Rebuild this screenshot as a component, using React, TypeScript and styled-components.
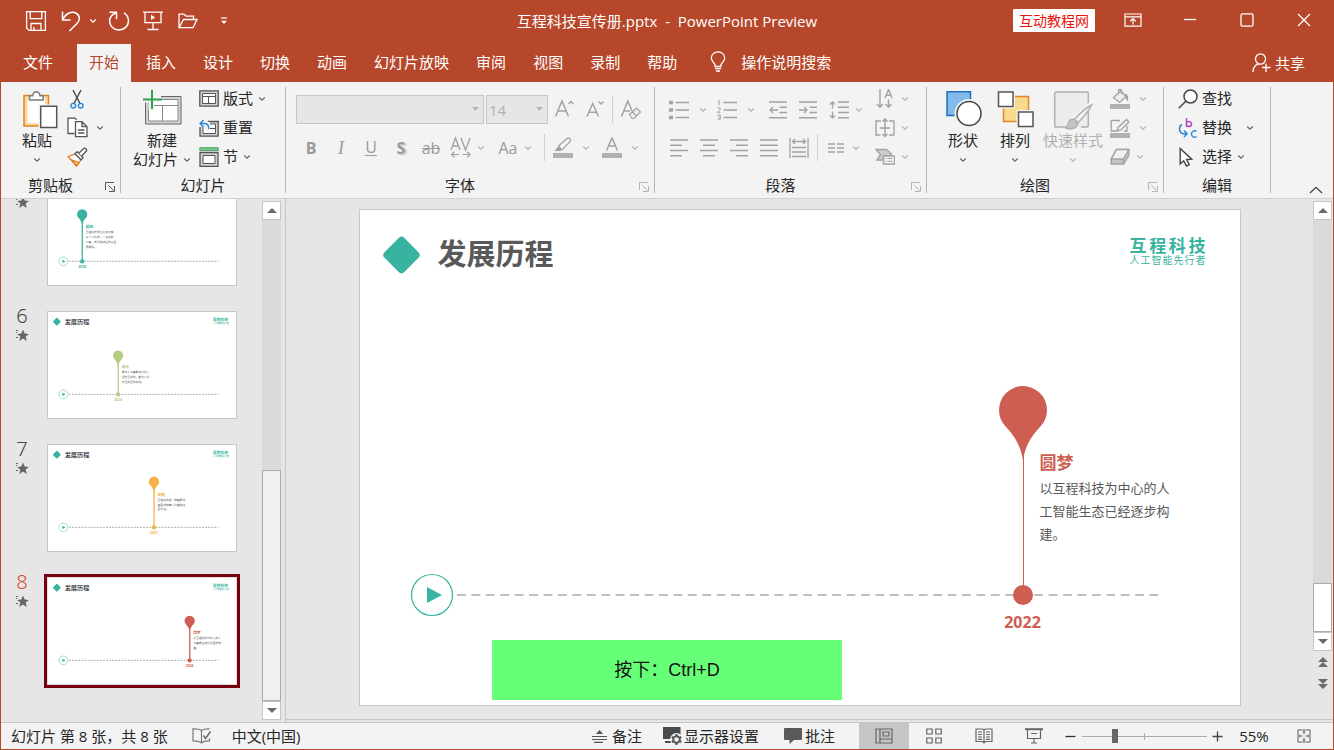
import React from 'react';
import styled, { createGlobalStyle, css } from 'styled-components';

const BRAND = '#b7472a';
const TEAL = '#37b3a0';
const UI_FONT = '"Open Sans", "Noto Sans CJK SC", sans-serif';
const DIM = '#a3a3a3';

const GlobalStyle = createGlobalStyle`
  *, *::before, *::after { box-sizing: border-box; }
  body { margin: 0; font-family: ${UI_FONT}; font-size: 15px; color: #262626; }
  button, select, input { font: inherit; color: inherit; }
  button { border: 0; padding: 0; background: none; cursor: default; }
`;

/* ---------- window frame ---------- */

const Window = styled.div`
  position: relative;
  display: grid;
  grid-template-rows: auto auto minmax(0, 1fr) auto;
  height: 100vh;
  min-width: 1280px;
  border: 1px solid ${BRAND};
  border-top: 0;
  background: #e6e6e6;
  overflow: hidden;
`;

const Header = styled.header`
  background: ${BRAND};
  color: #fff;
`;

const TitleBar = styled.div`
  display: grid;
  grid-template-columns: 1fr auto 1fr;
  height: 44px;
`;

const QuickAccess = styled.div`
  display: flex;
  align-items: center;
  height: 41px;
  padding-left: 18px;
`;

const WindowTitle = styled.h1`
  margin: 0;
  font-size: 15px;
  font-weight: 400;
  line-height: 42px;
  white-space: pre;
`;

const WindowControls = styled.div`
  display: flex;
  align-items: center;
  justify-content: flex-end;
  height: 40px;
  padding-right: 1px;
`;

const SiteBadge = styled.a`
  margin-right: 9px;
  padding: 0 6px;
  border-radius: 1px;
  background: #fff;
  color: #e8120c;
  font-size: 14px;
  line-height: 23px;
  text-decoration: none;
`;

const BarButton = styled.button<{ $w: number }>`
  display: flex;
  align-items: center;
  justify-content: center;
  width: ${(p) => p.$w}px;
  height: 40px;
`;

const TabBar = styled.nav`
  display: flex;
  gap: 3px;
  height: 38px;
  padding: 0 16px 0 10px;
  line-height: 34px;
`;

const Tab = styled.button<{ $active?: boolean; $file?: boolean }>`
  padding: 0 12px 3px;
  margin-right: ${(p) => (p.$file ? 9 : 0)}px;
  background: ${(p) => (p.$active ? '#f3f3f3' : 'transparent')};
  color: ${(p) => (p.$active ? BRAND : '#fff')};
`;

const TellMe = styled.button`
  display: flex;
  align-items: center;
  gap: 15px;
  padding: 0 0 3px 18px;
`;

const Share = styled.button`
  display: flex;
  align-items: center;
  gap: 4px;
  margin-left: auto;
  padding: 0 12px 1px;
`;

/* ---------- ribbon ---------- */

const Ribbon = styled.div`
  display: flex;
  height: 117px;
  border-bottom: 1px solid #d0d0d0;
  background: #f3f3f3;
`;

const Group = styled.section<{ $w: number }>`
  display: flex;
  flex-direction: column;
  flex: none;
  width: ${(p) => p.$w}px;
  padding: 2px 1px 0 0;
  background: linear-gradient(#b8b8b8, #b8b8b8) right 5px / 1px 106px no-repeat;
`;

const GroupBody = styled.div<{ $pad: number }>`
  display: flex;
  flex: none;
  height: 88px;
  padding-left: ${(p) => p.$pad}px;
`;

const Caption = styled.div`
  display: flex;
  flex: none;
  align-items: center;
  height: 26px;
`;

const CaptionText = styled.span`
  flex: 1;
  line-height: 26px;
  text-align: center;
`;

const Launcher = styled.button`
  display: flex;
  justify-content: center;
  width: 20px;
  padding-top: 4px;
`;

const BigButton = styled.button<{ $w: number }>`
  display: flex;
  flex-direction: column;
  align-items: center;
  width: ${(p) => p.$w}px;
  padding-top: 6px;
  line-height: 19px;
  white-space: nowrap;
  &:disabled { color: #b0b0b0; }
`;

const BigIcon = styled.span`
  display: block;
  height: 41px;
`;

const BigLine = styled.span`
  display: flex;
  align-items: center;
  gap: 5px;
  height: 19px;
`;

const Stack = styled.div<{ $gap?: number }>`
  display: flex;
  flex-direction: column;
  margin-left: ${(p) => p.$gap ?? 0}px;
`;

const StackRow = styled.div`
  display: flex;
  align-items: center;
  height: 29px;
`;

const LabelButton = styled.button<{ $icon: number }>`
  display: grid;
  grid-template-columns: ${(p) => p.$icon}px auto;
  align-items: center;
  line-height: 29px;
`;

const ToolRow = styled.div`
  display: flex;
  align-items: center;
  height: 39px;
  & + & { height: 37px; }
`;

const ToolRows = styled.div<{ $w?: number }>`
  padding-top: 6px;
  width: ${(p) => (p.$w ? `${p.$w}px` : 'auto')};
`;

const Tool = styled.button<{ $w?: number; $ml?: number }>`
  display: flex;
  flex: none;
  align-items: center;
  justify-content: center;
  width: ${(p) => p.$w ?? 30}px;
  height: 27px;
  margin-left: ${(p) => p.$ml ?? 0}px;
`;

const Glyph = styled.span<{ $look?: 'bold' | 'italic' | 'underline' | 'shadow' | 'strike' }>`
  color: #9b9b9b;
  font-size: 16px;
  line-height: 20px;
  ${(p) => p.$look === 'bold' && css`font-weight: 700;`}
  ${(p) => p.$look === 'italic' && css`font-family: "Liberation Serif", serif; font-size: 18px; font-style: italic;`}
  ${(p) => p.$look === 'underline' && css`border-bottom: 1px solid #9b9b9b; line-height: 16px;`}
  ${(p) => p.$look === 'shadow' && css`font-weight: 700; text-shadow: 2px 1px 1px #c8c8c8;`}
  ${(p) => p.$look === 'strike' && css`text-decoration: line-through;`}
`;

const Rule = styled.span<{ $l: number; $r: number }>`
  width: 1px;
  height: 27px;
  margin: 0 ${(p) => p.$r}px 0 ${(p) => p.$l}px;
  background: #d0d0d0;
`;

const Combo = styled.label<{ $w: number }>`
  position: relative;
  width: ${(p) => p.$w}px;
  margin-right: 2px;
  svg { position: absolute; right: 5px; top: 12px; pointer-events: none; }
`;

const ComboSelect = styled.select`
  display: block;
  width: 100%;
  height: 29px;
  padding: 0 2px;
  border: 1px solid #c6c6c6;
  border-radius: 0;
  background: #e6e6e6;
  appearance: none;
  &:disabled { color: #b1b1b8; opacity: 1; }
`;

const Collapse = styled.button`
  align-self: flex-end;
  margin-left: auto;
  padding: 0 10px 4px;
  line-height: 0;
`;

/* ---------- workspace ---------- */

const Workspace = styled.main`
  display: grid;
  grid-template-columns: 285px minmax(0, 1fr);
  min-height: 0;
`;

const ThumbPane = styled.aside`
  display: flex;
  justify-content: space-between;
  min-height: 0;
  padding-right: 4px;
  border-right: 1px solid #c6c6c6;
`;

const ThumbList = styled.ol`
  display: flex;
  flex-direction: column;
  justify-content: flex-end;
  gap: 25px;
  margin: 0;
  padding: 0 4px 37px 12px;
  overflow: hidden;
  list-style: none;
`;

const ThumbItem = styled.li`
  display: flex;
  flex: none;
  gap: 16px;
  height: 108px;
`;

const Marker = styled.div<{ $on?: boolean }>`
  width: 18px;
  font-family: "Noto Sans", sans-serif;
  font-size: 20px;
  font-weight: 300;
  text-align: center;
  color: ${(p) => (p.$on ? '#d24726' : '#444')};
  span { display: block; height: 12px; line-height: 10px; }
  svg { display: block; margin: 6px 0 0 3px; }
`;

const Thumb = styled.button<{ $on?: boolean }>`
  width: 190px;
  height: 108px;
  border: 1px solid ${(p) => (p.$on ? '#e2dede' : '#c6c6c6')};
  background: #fff;
  box-shadow: ${(p) => (p.$on ? '0 0 0 3px #75000f' : 'none')};
  svg { display: block; width: 100%; height: 100%; }
`;

const ScrollColumn = styled.div<{ $end: number }>`
  display: flex;
  flex: none;
  flex-direction: column;
  width: 19px;
  padding: 2px 0 ${(p) => p.$end}px;
`;

const ScrollButton = styled.button`
  display: flex;
  align-items: center;
  justify-content: center;
  flex: none;
  height: 19px;
  border: 1px solid #c6c6c6;
  background: #fff;
`;

const ScrollTrack = styled.div`
  display: flex;
  flex: 1;
  flex-direction: column;
  justify-content: flex-end;
  background: #dadada;
`;

const ScrollThumb = styled.div<{ $size: number; $white?: boolean }>`
  height: ${(p) => p.$size}%;
  border: 1px solid #ababab;
  background: ${(p) => (p.$white ? '#fff' : '#f0f0f0')};
`;

const PageJump = styled.button`
  display: flex;
  align-items: center;
  justify-content: center;
  height: 22px;
`;

const EditorPane = styled.section`
  display: flex;
  min-height: 0;
  margin-bottom: 2px;
  padding-right: 1px;
  border-bottom: 1px solid #c6c6c6;
`;

const Desk = styled.div`
  display: flex;
  flex: 1;
  justify-content: center;
  align-items: flex-start;
  padding-top: 10px;
  min-width: 0;
  overflow: hidden;
`;

const SlidePage = styled.article`
  position: relative;
  flex: none;
  width: 882px;
  aspect-ratio: 882 / 497;
  border: 1px solid #c6c6c6;
  background: #fff;
  color: #595959;
  > svg { display: block; width: 100%; height: 100%; }
`;

const SlideTitle = styled.h2`
  position: absolute;
  left: 78px;
  top: 24px;
  margin: 0;
  font-size: 29px;
  line-height: 40px;
`;

const SlideLogo = styled.div`
  position: absolute;
  right: 34px;
  top: 28px;
  width: 76px;
  color: ${TEAL};
  font-size: 10px;
  line-height: 12px;
  text-align-last: justify;
  strong { display: block; font-size: 17px; line-height: 16px; }
`;

const Milestone = styled.div`
  position: absolute;
  left: 680px;
  top: 241px;
  width: 132px;
  font-size: 13px;
  line-height: 23px;
  h3 { margin: 0 0 3px; color: #ce5d52; font-size: 17px; line-height: 23px; }
  p { margin: 0; }
`;

const Year = styled.span`
  position: absolute;
  left: 633px;
  top: 402px;
  width: 60px;
  color: #ce5d52;
  font-size: 16px;
  font-weight: 700;
  line-height: 20px;
  text-align: center;
`;

const KeyHint = styled.div`
  position: absolute;
  left: 50%;
  bottom: 49px;
  width: 350px;
  margin-left: -175px;
  background: #66ff78;
  color: #111;
  font-family: "Liberation Sans", "Noto Sans CJK SC", sans-serif;
  font-size: 18px;
  line-height: 60px;
  text-align: center;
`;

/* ---------- status bar ---------- */

const StatusBar = styled.footer`
  display: flex;
  align-items: stretch;
  height: 27px;
  padding: 0 6px 0 10px;
  border-top: 1px solid #c6c6c6;
  background: #f3f3f3;
  line-height: 26px;
  white-space: nowrap;
`;

const StatusButton = styled.button<{ $gap?: number; $ml?: number }>`
  display: flex;
  align-items: center;
  gap: ${(p) => p.$gap ?? 0}px;
  margin-left: ${(p) => p.$ml ?? 0}px;
`;

const Spacer = styled.span`
  flex: 1;
`;

const ViewSwitch = styled.div`
  display: flex;
  margin-left: 24px;
`;

const ViewButton = styled.button<{ $active?: boolean; $w?: number }>`
  display: flex;
  align-items: center;
  justify-content: center;
  width: ${(p) => p.$w ?? 50}px;
  background: ${(p) => (p.$active ? '#c6c6c6' : 'transparent')};
`;

const ZoomSlider = styled.input`
  align-self: center;
  width: 125px;
  height: 14px;
  margin: 0;
  appearance: none;
  background:
    linear-gradient(#ababab, #ababab) center / 100% 1px no-repeat,
    linear-gradient(#ababab, #ababab) center / 1px 7px no-repeat;
  &::-webkit-slider-thumb {
    appearance: none;
    width: 6px;
    height: 14px;
    background: #666;
  }
`;

const ZoomValue = styled.button`
  width: 54px;
  text-align: center;
`;

/* ---------- icons ---------- */

type IconProps = { w: number; h: number; c?: string; sw?: number; children: React.ReactNode };
const Icon = ({ w, h, c = '#fff', sw = 1.3, children }: IconProps) => (
  <svg width={w} height={h} viewBox={`0 0 ${w} ${h}`} fill="none" stroke={c} strokeWidth={sw} aria-hidden="true">
    {children}
  </svg>
);

const Chevron = ({ c = '#666' }: { c?: string }) => (
  <Icon w={8} h={6} c={c} sw={1.2}><path d="M1.2 1.5 4 4.2 6.8 1.5" /></Icon>
);
const Triangle = ({ up, c = '#6a6a6a' }: { up?: boolean; c?: string }) => (
  <Icon w={10} h={5} c="none"><path fill={c} d={up ? 'M5 0 10 5H0z' : 'M0 0h10L5 5z'} /></Icon>
);
const DoubleArrow = ({ down }: { down?: boolean }) => (
  <Icon w={10} h={10} c="none">
    <path fill="#6a6a6a" d={down ? 'M0 0h10L5 5zM0 5h10L5 10z' : 'M5 0 10 5H0zM5 5 10 10H0z'} />
  </Icon>
);
const LauncherIcon = ({ c = '#666' }: { c?: string }) => (
  <Icon w={10} h={10} c={c} sw={1}><path d="M.5 8V.5H9M3.5 3.5 8.5 8.5M9.5 4v5.5H4" /></Icon>
);

const SaveIcon = () => (
  <Icon w={22} h={22}><path d="M1.6 1.6h18.8v18.8H4L1.6 18zM5.2 1.6v7h11.6v-7M6 20v-6.500h10V20M9 20v-3" /></Icon>
);
const UndoIcon = () => (
  <Icon w={20} h={22} sw={1.5}><path d="M1.5 1.500V10h8M1.800 9.500C5 3 11 .8 15.500 3.500c4 2.500 3.500 7 .5 10L8.500 21" /></Icon>
);
const RedoIcon = () => (
  <Icon w={22} h={22} sw={1.5}><path d="M1.500 2.200h7v7M8.500 2.500C3.500 4.500 1 8.500 1.800 12.500c.8 4.600 4.600 7.500 9.200 7.500 5.200 0 9.500-4.100 9.500-9 0-3.500-1.800-6.500-4.500-8.200" /></Icon>
);
const PresentIcon = () => (
  <Icon w={20} h={20}><path d="M0 1.200h20M2 1.500v10.200h16V1.500M10 12v6M4.500 18.500h11" /><path d="M8 3.800v5.200L12.200 6.400z" fill="#fff" stroke="none" /></Icon>
);
const FolderIcon = () => (
  <Icon w={20} h={16}><path d="M1 14.500V1.200h5l2 2h7.500v3.300M1 14.700h14L19 6.500H5.500z" /></Icon>
);
const OverflowIcon = () => (
  <Icon w={6} h={8} sw={1.200}><path d="M0 1h6" /><path d="M0 3.800h6L3 7z" fill="#fff" stroke="none" /></Icon>
);
const RibbonModeIcon = () => (
  <Icon w={18} h={14} sw={1.200}><path d="M1 1h16v12.200H1zM1 3.800h16M9 11.500V5.800M6.200 8.300 9 5.600l2.800 2.700" /></Icon>
);
const MinimizeIcon = () => <Icon w={14} h={14} sw={1.300}><path d="M1 6.500h12" /></Icon>;
const MaximizeIcon = () => <Icon w={14} h={14}><rect x="1" y=".8" width="12" height="12.400" rx="1.500" /></Icon>;
const CloseIcon = () => <Icon w={14} h={14} sw={1.300}><path d="M1 1l12 12M13 1 1 13" /></Icon>;
const BulbIcon = () => (
  <Icon w={16} h={22}><path d="M5 15.500v-2C3.500 11 1.300 9.800 1.300 7a6.500 6 0 0 1 13.400 0c0 2.800-2.200 4-3.700 6.500v2zM5 17.700h6M6 20h4" /></Icon>
);
const PersonIcon = () => (
  <Icon w={19} h={20} sw={1.300}><ellipse cx="8.500" cy="6" rx="5" ry="5.200" /><path d="M1 19c0-4.500 2.500-7.800 6-8M10 14.500h8.500M14 10.500V19" /></Icon>
);

const PasteIcon = () => (
  <Icon w={42} h={41} c="#e0861f" sw={1.500}>
    <path d="M8 5.500H32.500V36H8z" fill="#fbd9a0" />
    <path d="M11.500 8h17.500v25H11.500z" fill="#fff" stroke="none" />
    <path d="M13.500 10V5.800h3.200C17 3 18.300 1.800 20.300 1.800s3.300 1.200 3.700 4h3.200V10z" fill="#fff" stroke="#7a7a7a" />
    <path d="M22.500 14.500H43v25H22.500z" fill="#f3f3f3" stroke="none" />
    <path d="M24.700 16.200h16v21.300h-16z" fill="#fff" stroke="#555" />
  </Icon>
);
const CutIcon = () => (
  <Icon w={14} h={20} c="#444" sw={1.400}>
    <path d="M3 1l7 13.500M11 1 4 14.500" />
    <circle cx="3.300" cy="16.700" r="2.300" stroke="#2b88d8" />
    <circle cx="10.700" cy="16.700" r="2.300" stroke="#2b88d8" />
  </Icon>
);
const CopyIcon = () => (
  <Icon w={21} h={21} c="#555"><path d="M7.500 16.500H1V1.200h7l1.500 1.500" fill="#fff" /><path d="M8.500 4.700h6.500l5 5v10H8.500zM15 4.700v5h5M11 13h6.500M11 16h6.500" fill="#fff" /></Icon>
);
const BrushIcon = () => (
  <Icon w={21} h={20} c="#e0781f">
    <path d="M1 9.500 8.500 7 14 12.800 9.500 19z" fill="#fff" />
    <path d="M4.500 12.800 11.800 15.500 9.500 19z" fill="#fbc878" />
    <path d="M8 6.800 10.200 4.700 16 10.500 14 12.800z" fill="#fff" stroke="#555" />
    <path d="M11.800 6.200 17 1.300c1-.8 3.200 1.300 2.500 2.500L14.700 9" fill="#fff" stroke="#555" />
  </Icon>
);
const NewSlideIcon = () => (
  <Icon w={40} h={41} c="#777" sw={1}>
    <path d="M3.500 6.500h35.500v27.500H3.500z" stroke="#666" fill="#d2d2d2" />
    <path d="M6.500 9.500h29.500v21.500H6.500z" fill="#fff" stroke="#888" /><path d="M6.500 15.500h29.500M20.500 15.500v15.500" stroke="#888" />
    <path d="M0 4.500h19v8H12v8H6.500v-8H0z" fill="#f3f3f3" stroke="none" />
    <path d="M10 0v19M1 9.500h19" stroke="#2ea04f" strokeWidth="2" />
  </Icon>
);
const LayoutIcon = () => (
  <Icon w={20} h={17} c="#555" sw={1}><path d="M.8.800h18.400v15.400H.8z" fill="#d2d2d2" strokeWidth="1.300" /><path d="M3.500 3.500h13v10h-13z" fill="#fff" /><path d="M3.500 6.500h13M9.500 6.500v7" /></Icon>
);
const ResetIcon = () => (
  <Icon w={20} h={18} c="#555" sw={1}>
    <path d="M1 2.500h18.200v14.700H1z" fill="#d2d2d2" strokeWidth="1.300" /><path d="M4 5h12.500v9.500H4z" fill="#fff" /><path d="M10 9.500h6.500" />
    <path d="M0 0h9v3h2v9H6V8H0z" fill="#f3f3f3" stroke="none" />
    <path d="M4.500 1 1.200 4.500 4.500 8M1.500 4.500h4c3 0 4.300 2 4.300 5.500" stroke="#2b88d8" strokeWidth="1.500" />
  </Icon>
);
const SectionIcon = () => (
  <Icon w={20} h={20} c="#555" sw={1}><path d="M.8.800h18.400v2.500H.8z" fill="#8fd0a0" stroke="#2ea04f" /><path d="M1 5.500h18v14H1z" fill="#d2d2d2" strokeWidth="1.300" /><path d="M4 8.500h12v8H4z" fill="#fff" /></Icon>
);

const GrowIcon = ({ down }: { down?: boolean }) => (
  <Icon w={22} h={24} c={DIM} sw={1.500}>
    <path d={down ? 'M3 18.500 8.700 5.500 14.500 18.500M5 14.300h7.500' : 'M1.500 18.500 8 3l6.500 15.500M4 13h8'} />
    <path d={down ? 'M14.500 3.500 17 6l2.500-2.500' : 'M14.500 6 17 3.500 19.500 6'} />
  </Icon>
);
const ClearFormatIcon = () => (
  <Icon w={22} h={24} c={DIM} sw={1.500}><path d="M1.500 18.500 7.800 3 12 13M4 13h6" /><path d="M9.500 16.500 16.500 10l4 4-6.500 6.500h-2zM12.500 14l4 4" fill="#ededed" strokeWidth="1.200" /></Icon>
);
const SpacingIcon = () => (
  <Icon w={22} h={24} c={DIM} sw={1.400}><path d="M1 14 5.500 2 10 14M2.500 10h6M11 2l4.500 12L20 2" /><path d="M1.500 18.500H9M4.500 15.800l-3 2.700 3 2.700M12.500 18.500H20M17 15.800l3 2.700-3 2.700" strokeWidth="1.200" /></Icon>
);
const HighlightIcon = () => (
  <Icon w={20} h={22} c={DIM}><path d="M0 16h20v5H0z" fill="#b1b1b1" stroke="none" /><path d="M6 8.500 14.500 1.200c2.500-.5 3.500 1 2.800 3L9.500 12.500l-4 .5z" /><path d="M1.500 14 6 8.500l3.500 4L7 14z" fill={DIM} stroke="none" /></Icon>
);
const FontColorIcon = () => (
  <Icon w={20} h={22} c={DIM} sw={1.500}><path d="M0 16h20v5H0z" fill="#b1b1b1" stroke="none" /><path d="M4.500 13.500 10 1l5.500 12.500M6.500 9h7" /></Icon>
);

const BulletsIcon = () => (
  <Icon w={20} h={20} c={DIM} sw={1.500}><path d="M0 .8h4v3.500H0zM0 8.200h4v3.500H0zM0 15.700h4v3.500H0z" fill={DIM} stroke="none" /><path d="M6.500 2.500H20M6.500 10H20M6.500 17.500H20" /></Icon>
);
const NumberingIcon = () => (
  <Icon w={20} h={20} c={DIM} sw={1.500}>
    <path d="M.8 1.500 2.200.8v4.500M.5 8h2.700v1.800L.5 12.300h3M.5 15h2.800v4.200H.5M1 17h2" strokeWidth="1" />
    <path d="M6.500 2.500H20M6.500 10H20M6.500 17.500H20" />
  </Icon>
);
const IndentIcon = ({ more }: { more?: boolean }) => (
  <Icon w={18} h={18} c={DIM} sw={1.500}><path d="M0 1h18M10.500 6.300H18M10.500 11.500H18M0 16.800h18" /><path d={more ? 'M0 9h8M5 6l3 3-3 3' : 'M1 9h8M4 6 1 9l3 3'} strokeWidth="1.300" /></Icon>
);
const LineSpacingIcon = () => (
  <Icon w={20} h={18} c={DIM} sw={1.500}><path d="M9 1h11M9 6.300h11M9 11.500h11M9 16.800h11" /><path d="M3.500 1v6.500M1 3.500 3.500 1 6 3.500M3.500 17v-6.500M1 14.500 3.500 17 6 14.500" strokeWidth="1.300" /></Icon>
);
const AlignIcon = ({ d }: { d: string }) => <Icon w={18} h={18} c={DIM} sw={1.500}><path d={d} /></Icon>;
const DistributeIcon = () => (
  <Icon w={20} h={20} c={DIM} sw={1.300}><path d="M1 0v20M19 0v20M3 9.500h14M3 14h14M3 18.500h14M3.500 3.500h13M6 1 3.500 3.500 6 6M14 1l2.500 2.500L14 6" /></Icon>
);
const ColumnsIcon = () => (
  <Icon w={16} h={10} c={DIM} sw={1.400}><path d="M0 1h7M0 5h7M0 9h7M9 1h7M9 5h7M9 9h7" /></Icon>
);
const TextDirectionIcon = () => (
  <Icon w={20} h={20} c={DIM} sw={1.400}><path d="M5 0v18M2 15l3 3.300L8 15M13.500 10.500v7.800M10.500 15l3 3.300 3-3.300M10 9l3.500-8.500L17 9M11 6.300h5" /></Icon>
);
const AlignTextIcon = () => (
  <Icon w={20} h={20} c={DIM} sw={1.400}><path d="M6 3H1v14h4.500M14 3h5v14h-5M5 10h10M10 1v17.500M7.500 3.500 10 1l2.500 2.500M7.500 16l2.500 2.500 2.500-2.500" /></Icon>
);
const SmartArtIcon = () => (
  <Icon w={20} h={17} c={DIM} sw={1.400}><path d="M1 1.500h10.500l5 4.500-2 2H8.500v4H2l3.500-5.500z" fill="#ccc" /><path d="M8.500 8h11v8h-11z" fill="#f3f3f3" /><path d="M10.500 10.500h1M12.500 10.500h5M10.500 13.300h1M12.500 13.300h5" strokeWidth="1" /></Icon>
);

const ShapesIcon = () => (
  <Icon w={38} h={41} c="#1b6fbd" sw={1.500}>
    <path d="M3 1.800h23.500V25.500H3z" fill="#83b9eb" /><circle cx="25" cy="23.500" r="14.500" fill="#f3f3f3" stroke="none" /><circle cx="25" cy="23.500" r="12" fill="#fff" stroke="#444" />
  </Icon>
);
const ArrangeIcon = () => (
  <Icon w={38} h={41} c="#e8852a" sw={1.500}>
    <path d="M7.500 6.500h25v25H7.500z" fill="#f8da8e" /><path d="M0 0h19v18.500H0zM20.500 20h18v18H20.500z" fill="#f3f3f3" stroke="none" />
    <path d="M2.500 2H17v14.500H2.500zM22.500 22H37v14.500H22.500z" fill="#fff" stroke="#555" />
  </Icon>
);
const StylesIcon = () => (
  <Icon w={42} h={41} c="#b0b0b0" sw={1.500}>
    <path d="M12 37H4.500c-1 0-1.800-.8-1.800-1.800V3.800C2.700 2.800 3.500 2 4.500 2h30c1 0 1.800.8 1.800 1.800V35.200c0 1-.8 1.800-1.800 1.800H29" fill="#ececec" />
    <path d="M42 12 24 31 20 41H10l10-15L38 12z" fill="#f3f3f3" stroke="none" />
    <path d="M39.500 15C35 17 27 24 22.500 29.500l3.500 3.200C31 27.500 37.500 20 39.500 15z" fill="#f3f3f3" />
    <path d="M13 37.500c3.500-.5 3-3.500 4-6 1-2 3.500-2.700 5.500-2l3 3.200c.5 5.500-7 7.500-12.500 4.800z" fill="#c4c4c4" />
  </Icon>
);
const FillIcon = () => (
  <Icon w={20} h={20} c={DIM}><path d="M0 15h20v5H0z" fill="#b1b1b1" stroke="none" /><path d="M3.500 8.500 11 2l5 5.500-6.500 6zM8.500 4V1.500c0-1.500 3-1.500 3 0V5" fill="#ececec" /><path d="M15 5c2.500 1 3 3 2.500 6l-2-3" fill={DIM} /></Icon>
);
const OutlineIcon = () => (
  <Icon w={20} h={20} c={DIM}><path d="M0 15h20v5H0z" fill="#b1b1b1" stroke="none" /><path d="M10 2.500H1.200V13H7M17 8v5h-3" /><path d="M8 9.500 16.500 1.500l2.500 2.500L11 12l-4 1z" fill="#ececec" /></Icon>
);
const EffectsIcon = () => (
  <Icon w={20} h={18} c={DIM} sw={1.400}><path d="M6.500 1.500h12.300v6L13.500 16H1.200v-5z" fill="#c4c4c4" /><path d="M1.200 11 6.500 1.500h12.300L13.500 11zM13.500 11v5" fill="#f0f0f0" /></Icon>
);
const FindIcon = () => (
  <Icon w={20} h={20} c="#444" sw={1.500}><circle cx="12.500" cy="7.500" r="6.500" fill="#fff" /><path d="M8 12 .8 19.300" /></Icon>
);
const ReplaceIcon = () => (
  <Icon w={20} h={20} c="#2b88d8" sw={1.500}>
    <path d="M8.500 0v9M8.500 5c1-2 5-2 5 1s-4 3.500-5 1" stroke="#b146c2" />
    <path d="M4 6.500C.5 8.500.5 14.500 5 15.800h3.500M6 12.500l3 3.300-3 3.300M18.500 13.500c-2-1.500-5-.5-5 2.500s3 4 5 2.500" />
  </Icon>
);
const SelectIcon = () => (
  <Icon w={16} h={20} c="#444" sw={1.400}><path d="M2.200 1.500v15.500l3.500-3.200L8.500 19l2.700-1.300L8.700 12.500l5-.3z" fill="#fff" /></Icon>
);
const CollapseIcon = () => <Icon w={14} h={8} c="#444" sw={1.300}><path d="M1 7l6-5.700L13 7" /></Icon>;

const StarIcon = () => (
  <Icon w={13} h={13} c="none">
    <path fill="#666" d="M7 .6 8.700 4.600l4.200.3-3.200 2.700 1 4.300L7 9.600 3.300 11.900l1-4.300L1.100 4.900l4.200-.3zM0 1h2v1H0zM0 3h1v1H0zM0 8h2v1H0z" />
  </Icon>
);

const ProofIcon = () => (
  <Icon w={20} h={16} c="#777" sw={1.200}><path d="M9.500 2.500C7.500 1 4.500.8 1 .9v12c3 0 6 0 8.500 1.900zM9.500 2.500C11.500 1 14 .8 17.500.9M9.500 14.800c2-1.700 5-2.100 8-2v-2.500" /><path d="M11.500 7.500 13.500 10.500 18.500 3.500" stroke="#666" strokeWidth="1.500" /></Icon>
);
const NotesIcon = () => (
  <Icon w={15} h={13} c="#555"><path d="M7.500 0 11 4H4z" fill="#555" stroke="none" /><path d="M0 6.500h15M0 9.500h15M2 12.300h9" strokeWidth="1.200" /></Icon>
);
const DisplayIcon = () => (
  <Icon w={22} h={20} c="#f3f3f3">
    <path d="M1 1h17.500v12H1zM3 15h8v2H3z" fill="#4a4a4a" stroke="none" />
    <circle cx="14.500" cy="13.500" r="6.500" fill="#f3f3f3" stroke="none" />
    <circle cx="14.500" cy="13.500" r="3.300" stroke="#555" strokeWidth="2" />
    <path d="M14.500 8v2M14.500 17v2M9.800 10.800l1.500 1M19.200 10.800l-1.500 1M9.800 16.200l1.500-1M19.200 16.200l-1.500-1" stroke="#555" strokeWidth="2" />
  </Icon>
);
const CommentIcon = () => (
  <Icon w={20} h={16} c="none"><path fill="#5a5a5a" d="M2 0h16q1 0 1 1v10q0 1-1 1H11l-4.500 4V12H2q-1 0-1-1V1q0-1 1-1z" /></Icon>
);
const NormalViewIcon = () => (
  <Icon w={18} h={16} c="#666" sw={1.200}><path d="M1 1h16v14H1zM5 1v14M5 11h12M8 4h6v4H8z" /></Icon>
);
const SorterIcon = () => (
  <Icon w={16} h={16} c="#666" sw={1.200}><path d="M.8 1h5.400v5H.8zM9.800 1h5.400v5H9.800zM.8 10h5.400v5H.8zM9.800 10h5.400v5H9.800z" /></Icon>
);
const ReadingIcon = () => (
  <Icon w={18} h={16} c="#666" sw={1.200}><path d="M9 2 7.500 1H1v12.500h6.500L9 15l1.500-1.500H17V1h-6.500zM9 2v13M3 4h4M3 6.500h4M3 9h4M3 11.300h4M11 4h4M11 6.500h4M11 9h4M11 11.300h4" /></Icon>
);
const ShowIcon = () => (
  <Icon w={18} h={16} c="#666" sw={1.200}><path d="M0 1.200h18" strokeWidth="2" /><path d="M2.500 2v8.500h13V2M6 5.500h6M9 10.500V15M6 15h6" /></Icon>
);
const MinusIcon = () => <Icon w={11} h={11} c="#333"><path d="M.5 5.500h10" /></Icon>;
const PlusIcon = () => <Icon w={11} h={11} c="#444"><path d="M.5 5.500h10M5.500.5v10" /></Icon>;
const FitIcon = () => (
  <Icon w={14} h={14} c="#666" sw={1.100}><path d="M1 1h12v12H1z" /><path d="M7 2v3.500M5.500 3.500 7 2l1.500 1.500M7 12V8.500M5.500 10.500 7 12l1.500-1.500M2 7h3.500M3.500 5.500 2 7l1.500 1.500M12 7H8.500M10.500 5.500 12 7l-1.500 1.500" strokeWidth=".9" /></Icon>
);

/* ---------- slides ---------- */

type Slide = {
  n: number; color: string; x: number; top: number; heading: string; headingY: number; year: string; lines: string[];
  headHidden?: boolean; // top edge scrolled above the list, so its header row is skipped
};

const slides: Slide[] = [
  { n: 5, color: TEAL, x: 160, top: 141, heading: '起航', headingY: 236, year: '2018', lines: ['互程科技成立之初只有', '三个小伙伴，一点点的', '小事，我们始终坚持以品', '质做好。'], headHidden: true },
  { n: 6, color: '#b4cb84', x: 328, top: 179, heading: '成长', headingY: 269, year: '2020', lines: ['推出人工智能初代机人', '语交互系统，首次人机', '交互的全新系统。'] },
  { n: 7, color: '#f5b145', x: 496, top: 147, heading: '突破', headingY: 242, year: '2021', lines: ['互程科技第一款智能设', '备面世销量人次首批达', '百万台。'] },
  { n: 8, color: '#ce5d52', x: 663, top: 176, heading: '圆梦', headingY: 266, year: '2022', lines: ['以互程科技为中心的人', '工智能生态已经逐步构', '建。'] },
];

const SlideArt = ({ slide, mini }: { slide: Slide; mini?: boolean }) => {
  const { x, top, color } = slide;
  return (
    <svg viewBox="0 0 880 495" fontFamily={UI_FONT} aria-hidden="true">
      <rect x="27.500" y="31" width="28" height="28" rx="4" transform="rotate(45 41.500 45)" fill={TEAL} />
      <path d="M97 385H798" stroke="#bfbfbf" strokeWidth={mini ? 5 : 2} strokeDasharray={mini ? '9.500 5' : '8.800 5.630'} />
      <circle cx="72" cy="385" r="20.500" fill="#fff" stroke={TEAL} strokeWidth={mini ? 2 : 1.2} />
      <path d="M67 377v16l15-8z" fill={TEAL} />
      <path d={`M${x + 0.5} ${top + 60}V385`} stroke={color} strokeWidth={mini ? 6 : 1} />
      <path
        d={`M${x} ${top + 74}c-2-13-8-24-17-33a24 24 0 1 1 34 0c-9 9-15 20-17 33z`}
        fill={color}
      />
      <circle cx={x} cy="385" r="10" fill={color} />
      {mini && (
        <>
          {!slide.headHidden && (
            <>
              <text x="78" y="56" fontSize="29" fontWeight="700" fill="#4e4e58">发展历程</text>
              <g fill={TEAL}>
                <text x="771" y="43" fontSize="18" fontWeight="700">互程科技</text>
                <text x="771" y="57" fontSize="11">人工智能先行者</text>
              </g>
            </>
          )}
          <text x={x + 17} y={slide.headingY - 6} fontSize="17" fontWeight="700" fill={color}>{slide.heading}</text>
          {slide.lines.map((line, i) => (
            <text key={line} x={x + 17} y={slide.headingY + 18 + i * 23} fontSize="13" fill="#595959">{line}</text>
          ))}
          <text x={x} y="418" fontSize="16" fontWeight="700" textAnchor="middle" fill={color}>{slide.year}</text>
        </>
      )}
    </svg>
  );
};

/* ---------- composed parts ---------- */

const Drop = ({ w, label, off }: { w: number; label: string; off?: boolean }) => (
  <Tool $w={w} aria-label={label} disabled={off}><Chevron c={off ? '#b4b4b4' : undefined} /></Tool>
);

const GroupFrame = ({ title, w, pad, launcher, children }: {
  title: string; w: number; pad: number; launcher?: 'on' | 'off'; children: React.ReactNode;
}) => (
  <Group $w={w} aria-label={title}>
    <GroupBody $pad={pad}>{children}</GroupBody>
    <Caption>
      <CaptionText>{title}</CaptionText>
      {launcher && <Launcher aria-label={`${title}设置`}><LauncherIcon c={launcher === 'on' ? '#555' : '#b4b4b4'} /></Launcher>}
    </Caption>
  </Group>
);

const tabs = ['插入', '设计', '切换', '动画', '幻灯片放映', '审阅', '视图', '录制', '帮助'];

export default function App() {
  const current = slides[3];
  return (
    <>
      <GlobalStyle />
      <Window>
        <Header>
          <TitleBar>
            <QuickAccess>
              <BarButton $w={34} aria-label="保存"><SaveIcon /></BarButton>
              <BarButton $w={36} aria-label="撤消"><UndoIcon /></BarButton>
              <BarButton $w={8} aria-label="撤消选项"><Chevron c="#fff" /></BarButton>
              <BarButton $w={44} aria-label="恢复"><RedoIcon /></BarButton>
              <BarButton $w={24} aria-label="从头开始"><PresentIcon /></BarButton>
              <BarButton $w={46} aria-label="打开"><FolderIcon /></BarButton>
              <BarButton $w={26} aria-label="自定义快速访问工具栏"><OverflowIcon /></BarButton>
            </QuickAccess>
            <WindowTitle>互程科技宣传册.pptx  -  PowerPoint Preview</WindowTitle>
            <WindowControls>
              <SiteBadge href="#">互动教程网</SiteBadge>
              <BarButton $w={57} aria-label="功能区显示选项"><RibbonModeIcon /></BarButton>
              <BarButton $w={57} aria-label="最小化"><MinimizeIcon /></BarButton>
              <BarButton $w={57} aria-label="最大化"><MaximizeIcon /></BarButton>
              <BarButton $w={57} aria-label="关闭"><CloseIcon /></BarButton>
            </WindowControls>
          </TitleBar>
          <TabBar>
            <Tab $file>文件</Tab>
            <Tab $active>开始</Tab>
            {tabs.map((t) => <Tab key={t}>{t}</Tab>)}
            <TellMe><BulbIcon />操作说明搜索</TellMe>
            <Share><PersonIcon />共享</Share>
          </TabBar>
        </Header>

        <Ribbon>
          <GroupFrame title="剪贴板" w={120} pad={15} launcher="on">
            <BigButton $w={42}>
              <BigIcon><PasteIcon /></BigIcon>
              <BigLine>粘贴</BigLine>
              <BigLine><Chevron /></BigLine>
            </BigButton>
            <Stack $gap={4}>
              <StackRow><Tool aria-label="剪切"><CutIcon /></Tool></StackRow>
              <StackRow><Tool aria-label="复制"><CopyIcon /></Tool><Drop w={16} label="复制选项" /></StackRow>
              <StackRow><Tool aria-label="格式刷"><BrushIcon /></Tool></StackRow>
            </Stack>
          </GroupFrame>

          <GroupFrame title="幻灯片" w={165} pad={9}>
            <BigButton $w={64}>
              <BigIcon><NewSlideIcon /></BigIcon>
              <BigLine>新建</BigLine>
              <BigLine>幻灯片<Chevron /></BigLine>
            </BigButton>
            <Stack $gap={5}>
              <StackRow><LabelButton $icon={24}><LayoutIcon />版式</LabelButton><Drop w={18} label="版式选项" /></StackRow>
              <StackRow><LabelButton $icon={24}><ResetIcon />重置</LabelButton></StackRow>
              <StackRow><LabelButton $icon={24}><SectionIcon />节</LabelButton><Drop w={18} label="节选项" /></StackRow>
            </Stack>
          </GroupFrame>

          <GroupFrame title="字体" w={369} pad={10} launcher="off">
            <ToolRows>
              <ToolRow>
                <Combo $w={188}>
                  <ComboSelect aria-label="字体名称" disabled><option value="" /></ComboSelect>
                  <Icon w={7} h={4} c="none"><path d="M0 0h7L3.500 4z" fill="#b4b4b4" /></Icon>
                </Combo>
                <Combo $w={62}>
                  <ComboSelect aria-label="字号" disabled><option>14</option></ComboSelect>
                  <Icon w={7} h={4} c="none"><path d="M0 0h7L3.500 4z" fill="#b4b4b4" /></Icon>
                </Combo>
                <Tool aria-label="增大字号"><GrowIcon /></Tool>
                <Tool aria-label="减小字号"><GrowIcon down /></Tool>
                <Rule $l={2} $r={3} />
                <Tool aria-label="清除格式"><ClearFormatIcon /></Tool>
              </ToolRow>
              <ToolRow>
                <Tool><Glyph $look="bold">B</Glyph></Tool>
                <Tool><Glyph $look="italic">I</Glyph></Tool>
                <Tool><Glyph $look="underline">U</Glyph></Tool>
                <Tool><Glyph $look="shadow">S</Glyph></Tool>
                <Tool><Glyph $look="strike">ab</Glyph></Tool>
                <Tool aria-label="字符间距"><SpacingIcon /></Tool>
                <Drop w={10} label="字符间距选项" off />
                <Tool $ml={7}><Glyph>Aa</Glyph></Tool>
                <Drop w={10} label="更改大小写选项" off />
                <Rule $l={11} $r={3} />
                <Tool aria-label="突出显示"><HighlightIcon /></Tool>
                <Drop w={16} label="突出显示选项" off />
                <Tool $ml={3} aria-label="字体颜色"><FontColorIcon /></Tool>
                <Drop w={16} label="字体颜色选项" off />
              </ToolRow>
            </ToolRows>
          </GroupFrame>

          <GroupFrame title="段落" w={272} pad={9} launcher="off">
            <ToolRows $w={206}>
              <ToolRow>
                <Tool aria-label="项目符号"><BulletsIcon /></Tool><Drop w={18} label="项目符号选项" off />
                <Tool aria-label="编号"><NumberingIcon /></Tool><Drop w={18} label="编号选项" off />
                <Tool $ml={3} aria-label="降低列表级别"><IndentIcon /></Tool>
                <Tool aria-label="提高列表级别"><IndentIcon more /></Tool>
                <Tool $ml={1} aria-label="行距"><LineSpacingIcon /></Tool><Drop w={10} label="行距选项" off />
              </ToolRow>
              <ToolRow>
                <Tool aria-label="左对齐"><AlignIcon d="M0 1h18M0 6.300h12M0 11.500h18M0 16.800h12" /></Tool>
                <Tool aria-label="居中"><AlignIcon d="M0 1h18M3 6.300h12M0 11.500h18M3 16.800h12" /></Tool>
                <Tool aria-label="右对齐"><AlignIcon d="M0 1h18M6 6.300h12M0 11.500h18M6 16.800h12" /></Tool>
                <Tool aria-label="两端对齐"><AlignIcon d="M0 1h18M0 6.300h18M0 11.500h18M0 16.800h18" /></Tool>
                <Tool aria-label="分散对齐"><DistributeIcon /></Tool>
                <Rule $l={3} $r={3} />
                <Tool aria-label="分栏"><ColumnsIcon /></Tool><Drop w={10} label="分栏选项" off />
              </ToolRow>
            </ToolRows>
            <Stack>
              <StackRow><Tool aria-label="文字方向"><TextDirectionIcon /></Tool><Drop w={10} label="文字方向选项" off /></StackRow>
              <StackRow><Tool aria-label="对齐文本"><AlignTextIcon /></Tool><Drop w={10} label="对齐文本选项" off /></StackRow>
              <StackRow><Tool aria-label="转换为 SmartArt"><SmartArtIcon /></Tool><Drop w={10} label="SmartArt 选项" off /></StackRow>
            </Stack>
          </GroupFrame>

          <GroupFrame title="绘图" w={237} pad={10} launcher="off">
            <BigButton $w={52}>
              <BigIcon><ShapesIcon /></BigIcon><BigLine>形状</BigLine><BigLine><Chevron /></BigLine>
            </BigButton>
            <BigButton $w={52}>
              <BigIcon><ArrangeIcon /></BigIcon><BigLine>排列</BigLine><BigLine><Chevron /></BigLine>
            </BigButton>
            <BigButton $w={64} disabled>
              <BigIcon><StylesIcon /></BigIcon><BigLine>快速样式</BigLine><BigLine><Chevron c="#b4b4b4" /></BigLine>
            </BigButton>
            <Stack>
              <StackRow><Tool aria-label="形状填充"><FillIcon /></Tool><Drop w={16} label="形状填充选项" off /></StackRow>
              <StackRow><Tool aria-label="形状轮廓"><OutlineIcon /></Tool><Drop w={16} label="形状轮廓选项" off /></StackRow>
              <StackRow><Tool aria-label="形状效果"><EffectsIcon /></Tool><Drop w={10} label="形状效果选项" off /></StackRow>
            </Stack>
          </GroupFrame>

          <GroupFrame title="编辑" w={107} pad={14}>
            <Stack>
              <StackRow><LabelButton $icon={24}><FindIcon />查找</LabelButton></StackRow>
              <StackRow><LabelButton $icon={24}><ReplaceIcon />替换</LabelButton><Drop w={36} label="替换选项" /></StackRow>
              <StackRow><LabelButton $icon={24}><SelectIcon />选择</LabelButton><Drop w={18} label="选择选项" /></StackRow>
            </Stack>
          </GroupFrame>
          <Collapse aria-label="折叠功能区"><CollapseIcon /></Collapse>
        </Ribbon>

        <Workspace>
          <ThumbPane>
            <ThumbList>
              {slides.map((s) => {
                const on = s.n === current.n;
                return (
                  <ThumbItem key={s.n}>
                    <Marker $on={on}><span>{s.headHidden ? null : s.n}</span><StarIcon /></Marker>
                    <Thumb $on={on} aria-label={`幻灯片 ${s.n}`}><SlideArt slide={s} mini /></Thumb>
                  </ThumbItem>
                );
              })}
            </ThumbList>
            <ScrollColumn $end={2}>
              <ScrollButton aria-label="向上滚动"><Triangle up /></ScrollButton>
              <ScrollTrack><ScrollThumb $size={48} /></ScrollTrack>
              <ScrollButton aria-label="向下滚动"><Triangle /></ScrollButton>
            </ScrollColumn>
          </ThumbPane>

          <EditorPane>
            <Desk>
              <SlidePage>
                <SlideArt slide={current} />
                <SlideTitle>发展历程</SlideTitle>
                <SlideLogo><strong>互程科技</strong>人工智能先行者</SlideLogo>
                <Milestone>
                  <h3>{current.heading}</h3>
                  <p>{current.lines.join('')}</p>
                </Milestone>
                <Year>{current.year}</Year>
              </SlidePage>
            </Desk>
            <ScrollColumn $end={24}>
              <ScrollButton aria-label="向上滚动"><Triangle up /></ScrollButton>
              <ScrollTrack><ScrollThumb $size={12} $white /></ScrollTrack>
              <ScrollButton aria-label="向下滚动"><Triangle /></ScrollButton>
              <PageJump aria-label="上一张幻灯片"><DoubleArrow /></PageJump>
              <PageJump aria-label="下一张幻灯片"><DoubleArrow down /></PageJump>
            </ScrollColumn>
          </EditorPane>
        </Workspace>

        <StatusBar>
          <span>幻灯片 第 8 张，共 8 张</span>
          <StatusButton $ml={24} aria-label="拼写检查"><ProofIcon /></StatusButton>
          <StatusButton $ml={20}>中文(中国)</StatusButton>
          <Spacer />
          <StatusButton $gap={5}><NotesIcon />备注</StatusButton>
          <StatusButton $ml={20}><DisplayIcon />显示器设置</StatusButton>
          <StatusButton $gap={2} $ml={24}><CommentIcon />批注</StatusButton>
          <ViewSwitch>
            <ViewButton $active aria-label="普通视图"><NormalViewIcon /></ViewButton>
            <ViewButton aria-label="幻灯片浏览"><SorterIcon /></ViewButton>
            <ViewButton aria-label="阅读视图"><ReadingIcon /></ViewButton>
            <ViewButton aria-label="幻灯片放映"><ShowIcon /></ViewButton>
          </ViewSwitch>
          <ViewButton $w={23} aria-label="缩小"><MinusIcon /></ViewButton>
          <ZoomSlider type="range" min={0} max={100} defaultValue={25} aria-label="显示比例" />
          <ViewButton $w={20} aria-label="放大"><PlusIcon /></ViewButton>
          <ZoomValue>55%</ZoomValue>
          <ViewButton $w={46} aria-label="适应窗口"><FitIcon /></ViewButton>
        </StatusBar>

        <KeyHint role="status">按下：Ctrl+D</KeyHint>
      </Window>
    </>
  );
}
